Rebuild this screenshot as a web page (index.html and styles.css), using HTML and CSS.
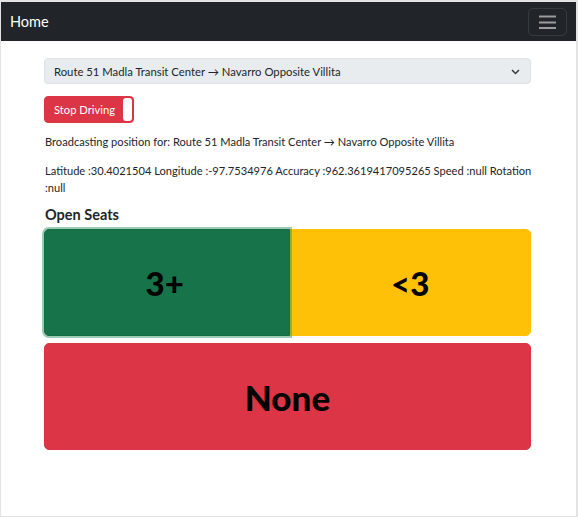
FILE: index.html
```html
<!DOCTYPE html>
<html lang="en">
<head>
<meta charset="utf-8">
<title>Home</title>
<link rel="stylesheet" href="styles.css">
</head>
<body>
<div class="frame">
  <nav class="navbar">
    <span class="brand">Home</span>
    <button class="toggler" type="button" aria-label="Toggle navigation">
      <svg width="17" height="14" viewBox="0 0 17 14"><path d="M0 1.5h17M0 7.5h17M0 13h17" stroke="rgba(255,255,255,0.55)" stroke-width="1.8" fill="none"/></svg>
    </button>
  </nav>
  <main class="container">
    <div class="select">
      <span>Route 51 Madla Transit Center → Navarro Opposite Villita</span>
      <svg class="chev" width="9" height="6" viewBox="0 0 9 6"><path d="M1 1l3.5 3.5L8 1" stroke="#343a40" stroke-width="1.5" fill="none"/></svg>
    </div>
    <button class="stop" type="button"><span class="stop-label">Stop Driving</span><span class="stop-knob"></span></button>
    <p class="info">Broadcasting position for: Route 51 Madla Transit Center → Navarro Opposite Villita</p>
    <p class="info">Latitude :30.4021504 Longitude :-97.7534976 Accuracy :962.3619417095265 Speed :null Rotation :null</p>
    <h5 class="heading">Open Seats</h5>
    <div class="group">
      <button class="seat seat-green" type="button">3+</button>
      <button class="seat seat-yellow" type="button">&lt;3</button>
    </div>
    <button class="seat seat-red" type="button">None</button>
  </main>
</div>
</body>
</html>
```
FILE: styles.css
```css
html, body {
  margin: 0;
  padding: 0;
  background: #fff;
}
.frame {
  box-sizing: border-box;
  width: 578px;
  height: 517px;
  border-style: solid;
  border-color: #e3e3e3;
  border-width: 2px 2px 1px 1px;
  font-family: Lato, "Open Sans", sans-serif;
  color: #212529;
  overflow: hidden;
}
.navbar {
  height: 39px;
  background: #212529;
  display: flex;
  align-items: center;
  justify-content: space-between;
  padding: 0 9px 0 9px;
}
.brand {
  color: #fff;
  font-size: 14.5px;
}
.toggler {
  box-sizing: border-box;
  width: 39px;
  height: 28px;
  background: transparent;
  border: 1px solid rgba(255,255,255,0.1);
  border-radius: 5px;
  display: flex;
  align-items: center;
  justify-content: center;
  padding: 0;
}
.container {
  width: 487px;
  margin-left: 43px;
  padding-top: 17px;
}
.select {
  box-sizing: border-box;
  height: 26px;
  background: #e9ecef;
  border: 1px solid #dee2e6;
  border-radius: 4px;
  display: flex;
  align-items: center;
  justify-content: space-between;
  padding: 0 10px 0 9px;
  font-size: 11.3px;
}
.chev { margin-top: 1px; }
.stop {
  box-sizing: border-box;
  margin-top: 12px;
  height: 27px;
  width: 90px;
  display: flex;
  align-items: stretch;
  padding: 1px;
  background: #dc3545;
  border: 1px solid #dc3545;
  border-radius: 4px;
  font-family: inherit;
  cursor: pointer;
}
.stop-label {
  flex: 1;
  display: flex;
  align-items: center;
  padding-left: 8px;
  color: #fff;
  font-size: 11.2px;
}
.stop-knob {
  width: 9px;
  background: #fff;
  border-radius: 3px;
}
.info {
  margin: 10px -10px 0 0;
  padding-left: 1px;
  font-size: 11.1px;
  line-height: 17px;
}
.info + .info { margin-top: 12px; }
.heading {
  margin: 10px 0 0 1px;
  font-size: 14.5px;
  font-weight: 700;
  line-height: 17px;
}
.group {
  margin-top: 6px;
  display: flex;
  height: 107px;
}
.seat {
  font-family: inherit;
  font-weight: 900;
  font-size: 33px;
  color: #000;
  border: 1px solid transparent;
  cursor: pointer;
}
.group .seat {
  flex: 1 1 auto;
}
.seat-green {
  background: #17734a;
  border-color: #146c43;
  border-radius: 5px 0 0 5px;
  box-shadow: 0 0 0 2px rgba(60,153,110,0.5);
  position: relative;
  z-index: 1;
  padding-right: 10px;
}
.seat-yellow {
  background: #ffc107;
  border-color: #ffc107;
  border-radius: 0 5px 5px 0;
}
.seat-red {
  display: block;
  width: 100%;
  height: 107px;
  margin-top: 7px;
  background: #dc3545;
  border-color: #dc3545;
  border-radius: 5px;
  font-size: 35px;
}
```
